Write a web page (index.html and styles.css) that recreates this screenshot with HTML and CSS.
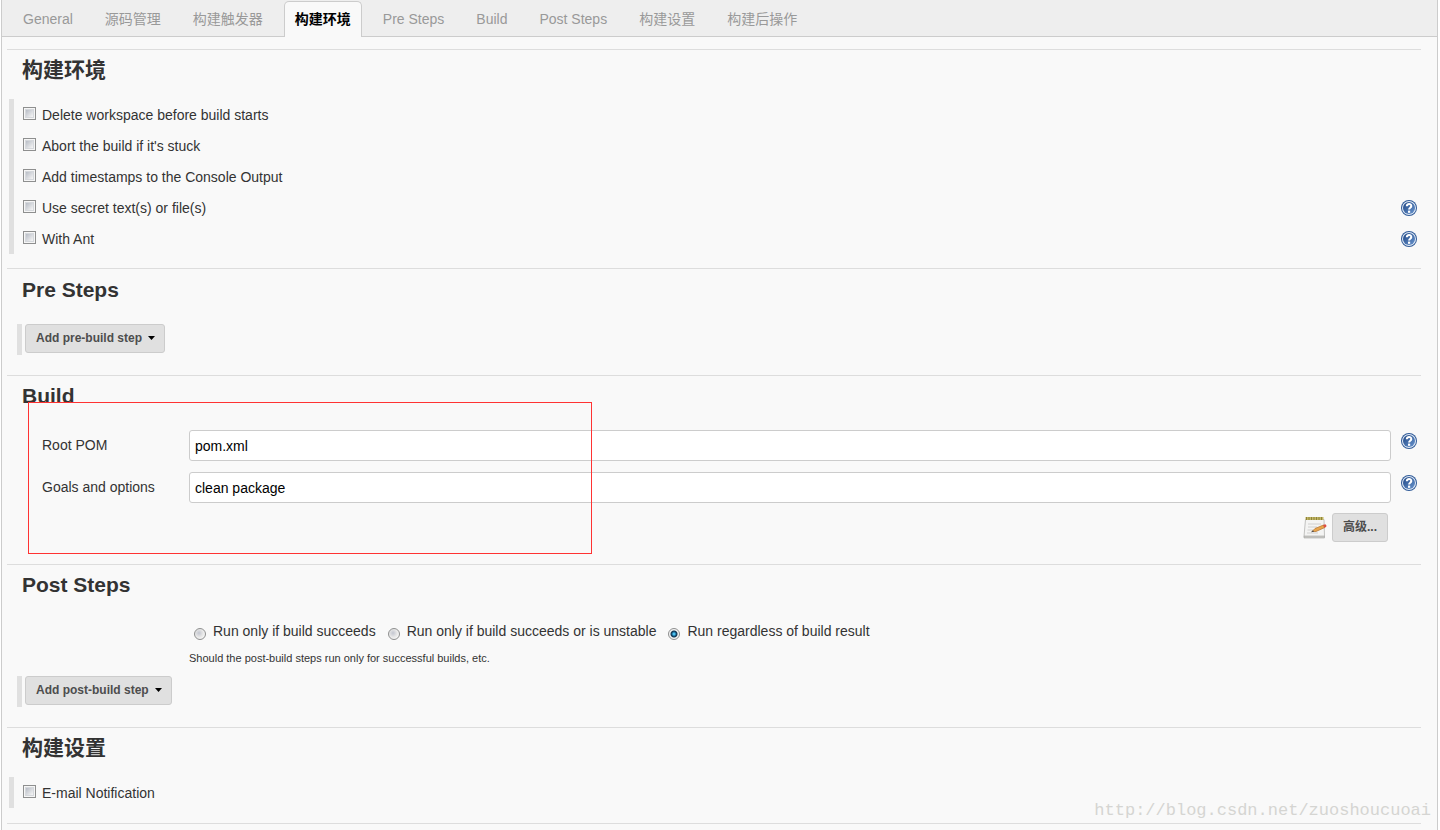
FILE: index.html
```html
<!DOCTYPE html>
<html lang="zh-CN">
<head>
<meta charset="utf-8">
<title>构建环境</title>
<link rel="stylesheet" href="styles.css">
</head>
<body>
<svg class="defs" aria-hidden="true">
  <defs>
    <linearGradient id="help-fill" x1="0" y1="0" x2="1" y2="1">
      <stop offset="0" stop-color="#1f4684"/>
      <stop offset="1" stop-color="#6a96cf"/>
    </linearGradient>
    <symbol id="help" viewBox="0 0 16 16">
      <circle cx="8" cy="8" r="8" fill="#2f5a98"/>
      <circle cx="8" cy="8" r="7" fill="#e4ecf6"/>
      <circle cx="8" cy="8" r="6" fill="url(#help-fill)"/>
      <path d="M5.800 6.300C5.700 3.300 10.400 3.400 10.300 6.100C10.200 7.800 8.100 7.600 8.100 9.600" fill="none" stroke="#fff" stroke-width="2"/>
      <rect x="7" y="10.600" width="2.200" height="2.200" fill="#fff"/>
    </symbol>
  </defs>
</svg>
<form class="frame">
  <nav class="tabs">
    <button type="button" class="tab">General</button>
    <button type="button" class="tab">源码管理</button>
    <button type="button" class="tab">构建触发器</button>
    <button type="button" class="tab tab-active">构建环境</button>
    <button type="button" class="tab">Pre Steps</button>
    <button type="button" class="tab">Build</button>
    <button type="button" class="tab">Post Steps</button>
    <button type="button" class="tab">构建设置</button>
    <button type="button" class="tab">构建后操作</button>
  </nav>
  <main class="config">
    <section class="section section-env">
      <h2 class="heading">构建环境</h2>
      <div class="checks">
        <div class="check-row"><label class="check"><input type="checkbox" class="box">Delete workspace before build starts</label></div>
        <div class="check-row"><label class="check"><input type="checkbox" class="box">Abort the build if it's stuck</label></div>
        <div class="check-row"><label class="check"><input type="checkbox" class="box">Add timestamps to the Console Output</label></div>
        <div class="check-row"><label class="check"><input type="checkbox" class="box">Use secret text(s) or file(s)</label>
          <a href="#" class="help" aria-label="Help"><svg class="help-icon"><use href="#help"/></svg></a></div>
        <div class="check-row"><label class="check"><input type="checkbox" class="box">With Ant</label>
          <a href="#" class="help" aria-label="Help"><svg class="help-icon"><use href="#help"/></svg></a></div>
      </div>
    </section>

    <section class="section section-pre">
      <h2 class="heading">Pre Steps</h2>
      <div class="adder adder-pre">
        <button type="button" class="button">Add pre-build step<svg class="caret" viewBox="0 0 7 4"><path d="M0 0H7L3.5 4Z"/></svg></button>
      </div>
    </section>

    <section class="section section-build">
      <h2 class="heading">Build</h2>
      <div class="fields">
        <label class="field-label" for="pom">Root POM</label>
        <input class="text" id="pom" type="text" value="pom.xml">
        <a href="#" class="help field-help" aria-label="Help"><svg class="help-icon"><use href="#help"/></svg></a>
        <label class="field-label" for="goals">Goals and options</label>
        <input class="text" id="goals" type="text" value="clean package">
        <a href="#" class="help field-help" aria-label="Help"><svg class="help-icon"><use href="#help"/></svg></a>
      </div>
      <div class="advanced">
        <svg class="notepad" viewBox="0 0 24 24">
          <path d="M2.500 3.500H21L21.500 20.500H1Z" fill="#f4f4f3" stroke="#c2c2c0"/>
          <path d="M1 20H21.500V22H1Z" fill="#c9c9c7" stroke="#a4a4a2" stroke-width=".6"/>
          <path d="M2.500 2.500H20.500" stroke="#c2b764" stroke-width="3"/>
          <path d="M3.500 1V4M6 1V4M8.500 1V4M11 1V4M13.500 1V4M16 1V4M18.500 1V4" stroke="#8e833c"/>
          <path d="M5 8H18M5 11H14M4.500 14H10M4 17H15" stroke="#d0d0cf"/>
          <path d="M9 15.500L12 12.500L20.500 9L21.800 11.500L13 15.500Z" fill="#e8a54c" stroke="#b0702c" stroke-width=".7"/>
          <path d="M20 9L22.300 8.200Q24 8.800 23.300 10.800L21.500 11.800Z" fill="#dc4f44"/>
          <path d="M8 16.200L10 14.300L11 15.700Z" fill="#4d4d4d"/>
        </svg>
        <button type="button" class="button">高级...</button>
      </div>
      <div class="highlight"></div>
    </section>

    <section class="section section-post">
      <h2 class="heading">Post Steps</h2>
      <div class="choice">
        <div class="radios">
          <label class="radio-label"><input type="radio" name="run" class="radio">Run only if build succeeds</label>
          <label class="radio-label"><input type="radio" name="run" class="radio">Run only if build succeeds or is unstable</label>
          <label class="radio-label"><input type="radio" name="run" class="radio" checked>Run regardless of build result</label>
        </div>
        <p class="note">Should the post-build steps run only for successful builds, etc.</p>
      </div>
      <div class="adder">
        <button type="button" class="button">Add post-build step<svg class="caret" viewBox="0 0 7 4"><path d="M0 0H7L3.5 4Z"/></svg></button>
      </div>
    </section>

    <section class="section section-settings">
      <h2 class="heading">构建设置</h2>
      <div class="checks">
        <div class="check-row"><label class="check"><input type="checkbox" class="box">E-mail Notification</label></div>
      </div>
    </section>
    <div class="section"></div>
  </main>
  <div class="watermark">http://blog.csdn.net/zuoshoucuoai</div>
</form>
</body>
</html>
```
FILE: styles.css
```css
* {
  box-sizing: border-box;
}

body {
  margin: 0;
  background: #fff;
  color: #333;
  font: 14px/20px "Liberation Sans", "Noto Sans CJK SC", sans-serif;
}

.defs {
  position: absolute;
  width: 0;
  height: 0;
}

.frame {
  position: relative;
  min-height: 100vh;
  margin: 0 2px 0 1px;
  border: solid #ccc;
  border-width: 0 1px;
  background: #f9f9f9;
}

.tabs {
  display: flex;
  gap: 10px;
  padding: 1px 10px 0;
  border-bottom: 1px solid #ccc;
  background: #eee;
}

.tab {
  height: 36px;
  margin-bottom: -1px;
  padding: 0 10px 2px;
  border: 1px solid transparent;
  border-bottom: 0;
  border-radius: 5px 5px 0 0;
  background: none;
  color: #999;
  font: inherit;
}

.tab-active {
  border-color: #ccc;
  background: #f9f9f9;
  color: #000;
  font-weight: bold;
}

.config {
  margin: 12px 16px 0 5px;
}

.section {
  position: relative;
  border-top: 1px solid #ddd;
}

.section-env {
  padding-bottom: 14px;
}

.section-pre {
  padding: 1px 0 20px;
}

.section-build {
  padding-bottom: 22px;
}

.section-post {
  padding-bottom: 20px;
}

.section-settings {
  padding-bottom: 15px;
}

.heading {
  margin: 0;
  padding: 5px 15px 14px;
  font-size: 21px;
  line-height: 30px;
}

.checks {
  margin-left: 2px;
  border-left: 5px solid #e0e0e0;
}

.check-row {
  display: flex;
  align-items: center;
  justify-content: space-between;
  height: 31px;
  padding: 0 4px 0 9px;
}

.check {
  display: flex;
  align-items: center;
  gap: 6px;
}

.box {
  appearance: none;
  width: 13px;
  height: 13px;
  margin: 0 0 3px;
  border: 1px solid #8e8f8f;
  background: linear-gradient(135deg, #b8bdc6, #f6f6f6) center / 7px 7px no-repeat, linear-gradient(#d5d8dc, #d5d8dc) center / 9px 9px no-repeat, #f6f6f6;
}

.help,
.help-icon {
  display: block;
  width: 16px;
  height: 16px;
}

.button {
  display: flex;
  align-items: center;
  height: 29px;
  padding: 0 10px 2px;
  border: 1px solid #ccc;
  border-radius: 3px;
  background: #e0e0e0;
  color: #4d4d4d;
  font: bold 12px/16px "Liberation Sans", "Noto Sans CJK SC", sans-serif;
}

.caret {
  width: 7px;
  height: 4px;
  margin: 1px -1px 0 6px;
  fill: #000;
}

.adder {
  height: 31px;
  margin-left: 10px;
  padding-left: 3px;
  border-left: 5px solid #e0e0e0;
}

.adder-pre {
  margin-top: 5px;
}

.fields {
  display: grid;
  grid-template-columns: 137px 1fr 16px;
  gap: 11px 10px;
  padding: 5px 4px 0 35px;
}

.field-label {
  padding-top: 5px;
}

.text {
  width: 100%;
  height: 31px;
  padding: 0 5px;
  border: 1px solid #ccc;
  border-radius: 3px;
  background: #fff;
  color: #000;
  font: inherit;
}

.field-help {
  margin-top: 3px;
}

.advanced {
  display: flex;
  justify-content: flex-end;
  align-items: center;
  gap: 5px;
  padding: 10px 33px 0 0;
}

.notepad {
  width: 24px;
  height: 24px;
}

.highlight {
  position: absolute;
  top: 26px;
  left: 21px;
  width: 564px;
  height: 152px;
  border: 1px solid #f33;
  pointer-events: none;
}

.choice {
  padding: 7px 0 10px 182px;
}

.radios {
  display: flex;
  flex-wrap: wrap;
  gap: 7px;
}

.radio-label {
  display: flex;
  align-items: center;
}

.radio {
  appearance: none;
  width: 12px;
  height: 12px;
  margin: 5px 7px 0 5px;
  border: 1px solid #8e8f8f;
  border-radius: 50%;
  background: radial-gradient(circle at 40% 40%, #c3c6d0, #e6e6e6 45%, #f4f4f4 70%);
}

.radio:checked {
  background: radial-gradient(circle, #4cc0ee 0 1px, #155f8c 2px, #12344f 3px, #f4f4f4 4px);
}

.note {
  margin: 9px 0 0;
  font-size: 11px;
  line-height: 16px;
}

.watermark {
  position: absolute;
  right: 6px;
  bottom: 7px;
  color: #d5d5d2;
  font: 17px/24px "Liberation Mono", monospace;
}
```
